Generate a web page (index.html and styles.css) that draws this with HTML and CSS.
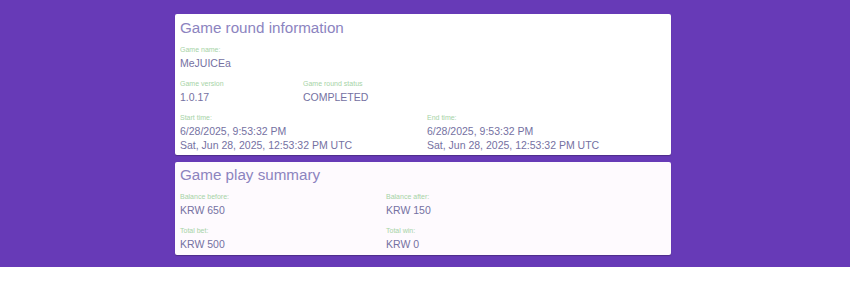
FILE: index.html
```html
<!DOCTYPE html>
<html lang="en">
<head>
  <meta charset="UTF-8">
  <title>Game round details</title>
  <link rel="stylesheet" href="styles.css">
</head>
<body>

  <div class="backdrop">
    <div class="wrap">

      <!-- Round info -->
      <div class="card">
        <h2>Game round information</h2>

        <div class="field">
          <div class="label">Game name:</div>
          <div class="value">MeJUICEa</div>
        </div>

        <div class="row row-quarter">
          <div class="field">
            <div class="label">Game version</div>
            <div class="value">1.0.17</div>
          </div>
          <div class="field">
            <div class="label">Game round status</div>
            <div class="value">COMPLETED</div>
          </div>
        </div>

        <div class="row row-half">
          <div class="field">
            <div class="label">Start time:</div>
            <div class="value">6/28/2025, 9:53:32 PM<br>Sat, Jun 28, 2025, 12:53:32 PM UTC</div>
          </div>
          <div class="field">
            <div class="label">End time:</div>
            <div class="value">6/28/2025, 9:53:32 PM<br>Sat, Jun 28, 2025, 12:53:32 PM UTC</div>
          </div>
        </div>
      </div>

      <!-- Summary -->
      <div class="card card-tint">
        <h2>Game play summary</h2>

        <div class="row row-summary">
          <div class="field">
            <div class="label">Balance before:</div>
            <div class="value">KRW 650</div>
          </div>
          <div class="field">
            <div class="label">Balance after:</div>
            <div class="value">KRW 150</div>
          </div>
        </div>

        <div class="row row-summary">
          <div class="field">
            <div class="label">Total bet:</div>
            <div class="value">KRW 500</div>
          </div>
          <div class="field">
            <div class="label">Total win:</div>
            <div class="value">KRW 0</div>
          </div>
        </div>
      </div>

    </div>
  </div>

</body>
</html>
```

FILE: styles.css
```css
body {
  margin: 0;
  background: #fff;
  font-family: "Liberation Sans", Arial, sans-serif;
}
.backdrop {
  background: #673ab7;
  padding: 14px 0 12px;
}
.wrap {
  width: 496px;
  margin-left: 175px;
  display: flex;
  flex-direction: column;
  gap: 7px;
}
.card {
  background: #fff;
  border-radius: 2px;
  box-shadow: 0 1px 1px rgba(0, 0, 0, 0.25);
  padding: 4px 4px 3px 5px;
  display: flex;
  flex-direction: column;
  gap: 9px;
}
.card-tint {
  background: #fefafe;
  padding-top: 3px;
  padding-bottom: 4px;
}
h2 {
  margin: 0 0 -2px;
  font-size: 15.2px;
  line-height: 20px;
  font-weight: normal;
  color: #8c84bf;
}
.row {
  display: grid;
}
.row-quarter {
  grid-template-columns: 123px 1fr;
}
.row-half {
  grid-template-columns: 247px 1fr;
}
.row-summary {
  grid-template-columns: 206px 1fr;
}
.label {
  font-size: 7px;
  line-height: 9px;
  color: #a6d3a6;
  margin-bottom: 2px;
}
.value {
  font-size: 10.5px;
  line-height: 14px;
  color: #7571a2;
}
```
